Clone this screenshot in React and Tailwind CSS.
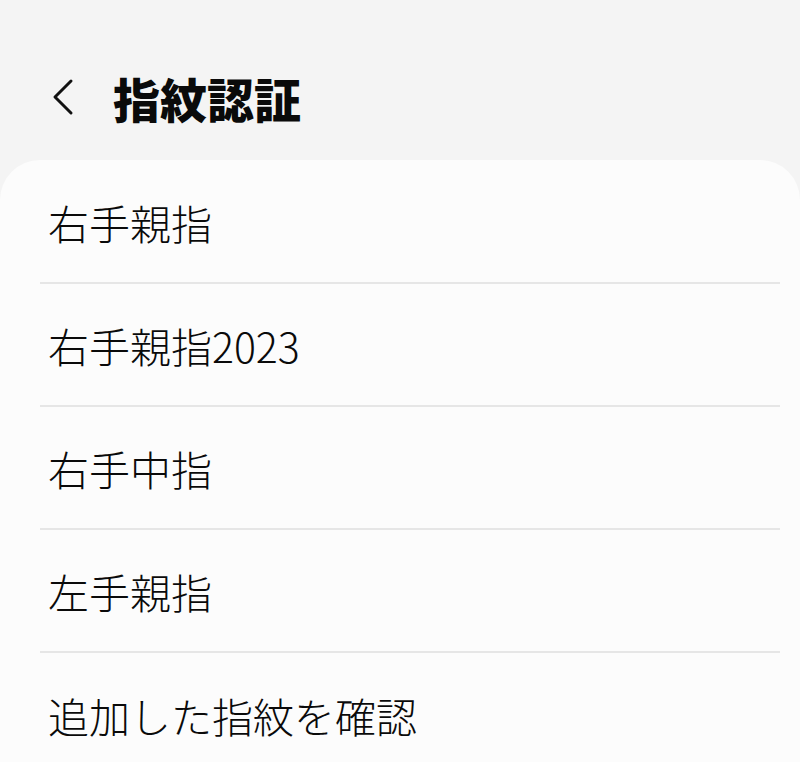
import React from 'react';

const items = ['右手親指', '右手親指2023', '右手中指', '左手親指', '追加した指紋を確認'];

const App = () => {
  return (
    <div
      className="h-[762px] overflow-hidden bg-[#f4f4f4] text-[#0a0a0a]"
      style={{ fontFamily: '"Noto Sans CJK JP", "Noto Sans", sans-serif' }}
    >
      <div className="flex h-[160px] items-center pt-[34px]">
        <button className="ml-[50px] flex h-[40px] w-[26px] items-center justify-center">
          <svg width="24" height="38" viewBox="0 0 24 38" fill="none">
            <path d="M20 3 L4 19 L20 35" stroke="#111" strokeWidth="3" strokeLinecap="round" strokeLinejoin="round" />
          </svg>
        </button>
        <h1 className="ml-[37px] text-[47px] font-black leading-none">指紋認証</h1>
      </div>

      <div className="rounded-[40px] bg-[#fcfcfc] pt-[1px] pb-10">
        <ul className="ml-[40px] mr-[20px]">
          {items.map((label, i) => (
            <li
              key={label}
              className={
                'flex h-[123px] items-center pl-[8px] pt-[2px] text-[41px] font-light leading-none ' +
                (i < items.length - 1 ? 'border-b-2 border-[#e6e6e6]' : '')
              }
            >
              {label}
            </li>
          ))}
        </ul>
      </div>
    </div>
  );
};

export default App;
